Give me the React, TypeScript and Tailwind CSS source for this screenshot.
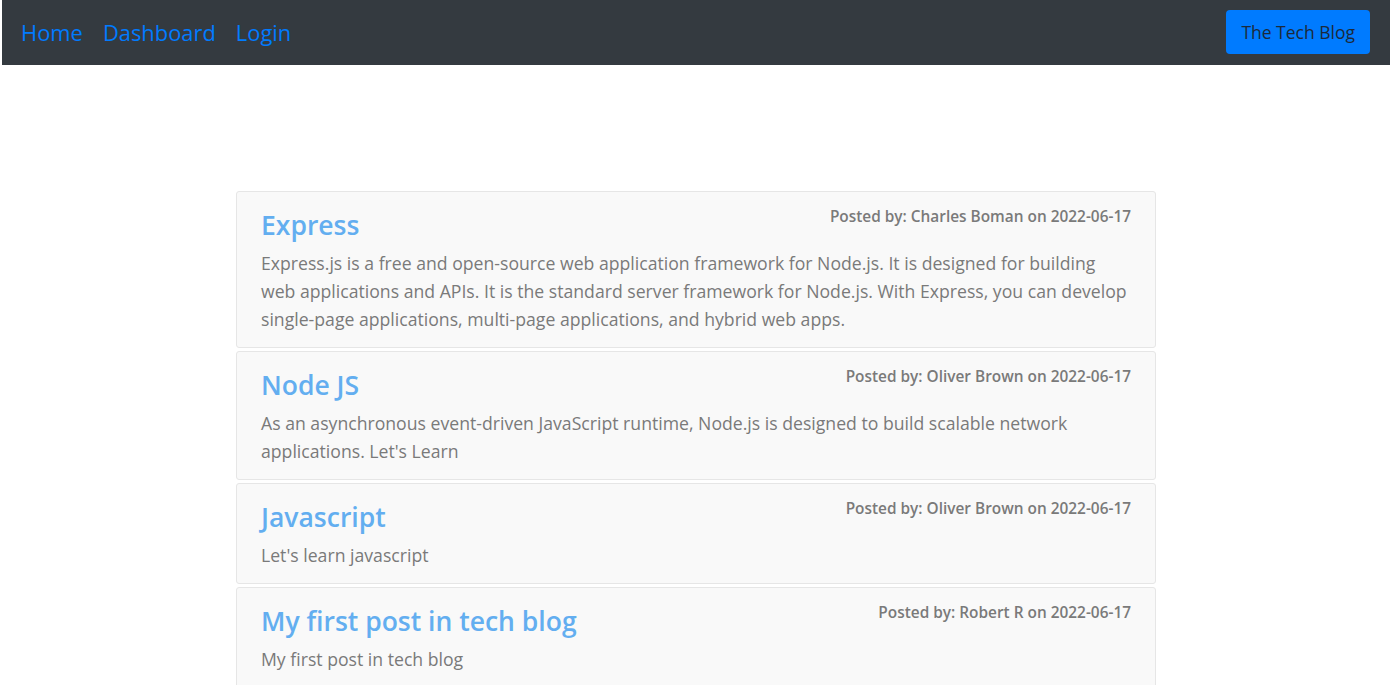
const posts = [
  {
    title: "Express",
    author: "Charles Boman",
    date: "2022-06-17",
    body: "Express.js is a free and open-source web application framework for Node.js. It is designed for building web applications and APIs. It is the standard server framework for Node.js. With Express, you can develop single-page applications, multi-page applications, and hybrid web apps.",
  },
  {
    title: "Node JS",
    author: "Oliver Brown",
    date: "2022-06-17",
    body: "As an asynchronous event-driven JavaScript runtime, Node.js is designed to build scalable network applications. Let's Learn",
  },
  {
    title: "Javascript",
    author: "Oliver Brown",
    date: "2022-06-17",
    body: "Let's learn javascript",
  },
  {
    title: "My first post in tech blog",
    author: "Robert R",
    date: "2022-06-17",
    body: "My first post in tech blog",
  },
]

export default function App() {
  return (
    <div className="min-h-screen bg-white font-['Open_Sans',sans-serif]">
      {/* Navbar */}
      <nav className="ml-[2px] mr-[5px] h-[65px] bg-[#343a40] flex items-center justify-between pl-[19px] pr-[20px]">
        <div className="flex items-center gap-[20px] pt-[2px] text-[21.9px] text-[#007bff]">
          <a href="#">Home</a>
          <a href="#">Dashboard</a>
          <a href="#">Login</a>
        </div>
        <button className="h-[44px] px-[15px] mb-[1px] rounded-[4px] bg-[#007bff] text-[#1c2a3a] text-[17.5px]">
          The Tech Blog
        </button>
      </nav>

      {/* Posts */}
      <main className="w-[920px] ml-[236px] mt-[126px] flex flex-col gap-[3px]">
        {posts.map((post) => (
          <div
            key={post.title}
            className="bg-[#f9f9f9] border border-[#e6e6e6] rounded-[3px] px-[24px] pt-[16px] pb-[14px]"
          >
            <div className="flex items-start justify-between">
              <h3 className="text-[26.5px] leading-[34px] font-semibold text-[#63aef0]">{post.title}</h3>
              <p className="text-[15.4px] leading-[18px] font-semibold text-[#7a7a7a]">
                Posted by: {post.author} on {post.date}
              </p>
            </div>
            <p className="mt-[7px] text-[17.65px] leading-[28px] text-[#7a7a7a]">{post.body}</p>
          </div>
        ))}
      </main>
    </div>
  )
}
